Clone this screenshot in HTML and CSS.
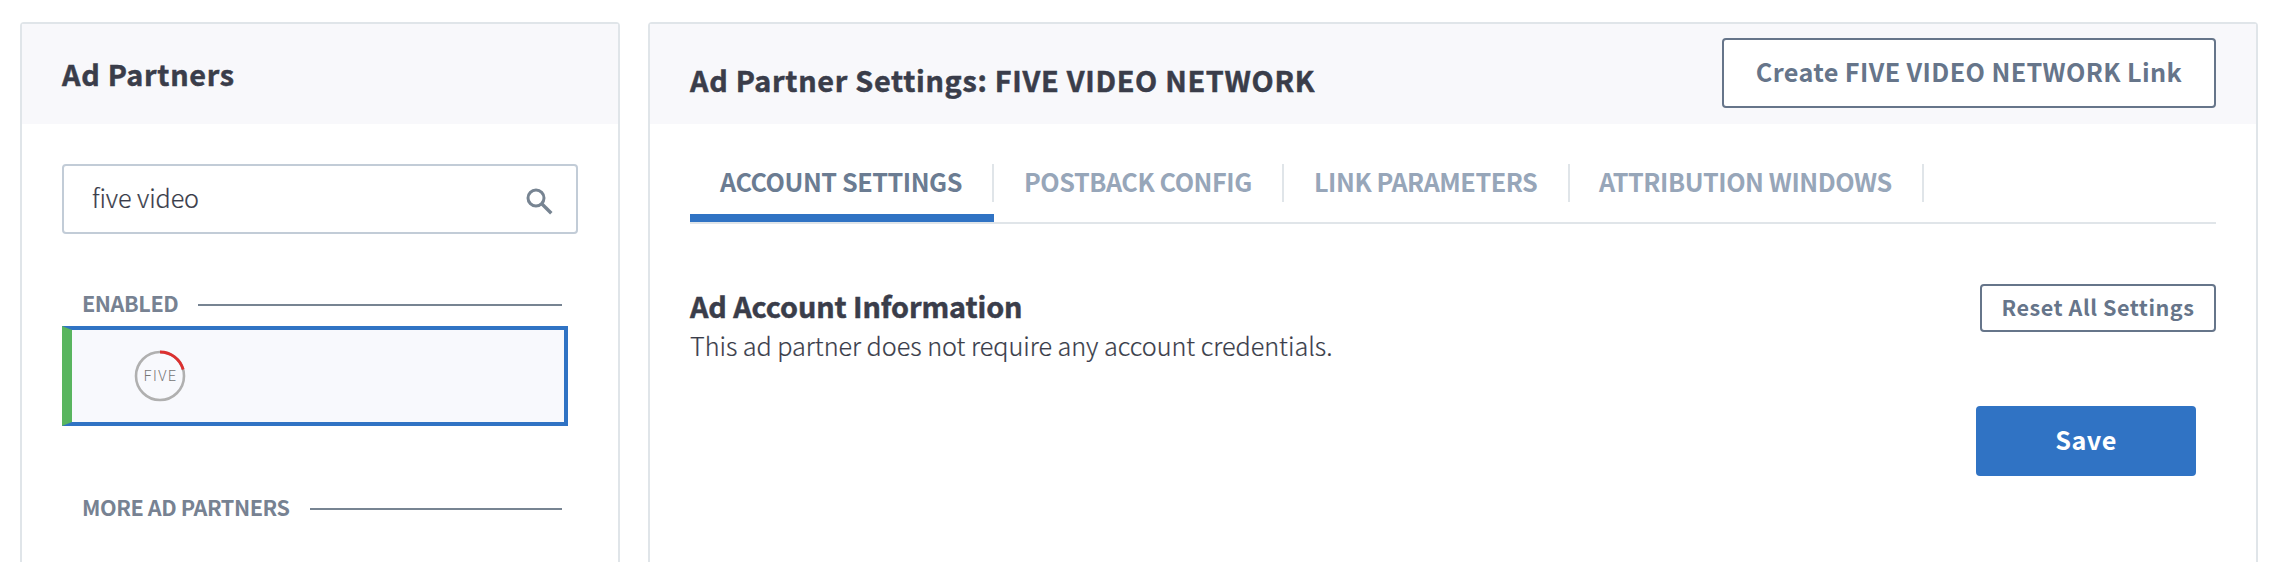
FILE: index.html
```html
<!DOCTYPE html>
<html lang="en">
<head>
<meta charset="utf-8">
<title>Ad Partners</title>
<link rel="stylesheet" href="styles.css">
</head>
<body>
<main class="page">
  <aside class="card partners">
    <header class="card-header"><h2 class="card-title">Ad Partners</h2></header>
    <div class="partners-body">
      <div class="search">
        <span class="search-text">five video</span>
        <svg class="search-icon" viewBox="0 0 28 28"><circle cx="10" cy="10" r="8" fill="none" stroke="#778492" stroke-width="3"/><path d="M16 16L25.3 25.3" stroke="#778492" stroke-width="3.4"/></svg>
      </div>
      <div class="group"><span class="group-label">ENABLED</span><i class="rule"></i></div>
      <div class="partner">
        <svg class="logo" viewBox="0 0 52 52"><circle cx="26" cy="26" r="24" fill="none" stroke="#b0b0b0" stroke-width="2.6"/><path d="M26 2A24 24 0 0 1 49.2 19.5" fill="none" stroke="#dc3030" stroke-width="2.8"/><text class="logo-text" x="9.8" y="30.8">FIVE</text></svg>
      </div>
      <div class="group more"><span class="group-label">MORE AD PARTNERS</span><i class="rule"></i></div>
    </div>
  </aside>
  <section class="card settings">
    <header class="card-header settings-header">
      <h2 class="card-title settings-title">Ad Partner Settings: FIVE VIDEO NETWORK</h2>
      <button class="btn create">Create FIVE VIDEO NETWORK Link</button>
    </header>
    <div class="settings-body">
      <nav class="tabs">
        <a class="tab active">ACCOUNT SETTINGS</a>
        <a class="tab">POSTBACK CONFIG</a>
        <a class="tab link-tab">LINK PARAMETERS</a>
        <a class="tab attribution-tab">ATTRIBUTION WINDOWS</a>
      </nav>
      <div class="account">
        <div class="account-info">
          <h3 class="account-title">Ad Account Information</h3>
          <p class="account-text">This ad partner does not require any account credentials.</p>
        </div>
        <button class="btn reset">Reset All Settings</button>
      </div>
      <button class="btn save">Save</button>
    </div>
  </section>
</main>
</body>
</html>
```
FILE: styles.css
```css
* { box-sizing: border-box; }
body { margin: 0; background: #fff; font-family: "Noto Sans CJK SC", "Noto Sans", sans-serif; color: #3a3d4a; }
h2, h3, p { margin: 0; }
.page { display: flex; gap: 28px; height: 562px; padding: 22px 24px 0 20px; overflow: hidden; }
.card { height: 600px; border: 2px solid #e0e5e9; border-radius: 4px; white-space: nowrap; }
.partners { width: 600px; flex: none; }
.settings { flex: 1; }
.card-header { height: 100px; padding: 0 40px; background: #f8f8fb; }
.card-title { font-size: 28.8px; font-weight: 700; letter-spacing: 0.7px; line-height: 40px; padding-top: 30px; -webkit-text-stroke: 0.5px #3a3d4a; }
.partners-body { padding: 40px 40px 0; }
.search { display: flex; justify-content: space-between; width: 516px; height: 70px; padding: 22px 22px 0 28px; border: 2px solid #c2ccd7; border-radius: 4px; }
.search-text { font-size: 25.2px; font-weight: 300; letter-spacing: -0.1px; line-height: 18px; -webkit-text-stroke: 0.2px #3a3d4a; }
.search-icon { width: 28px; height: 28px; }
.group { display: flex; align-items: center; height: 32px; margin-top: 55px; padding: 0 6px 0 20px; width: 506px; gap: 20px; }
.group-label { padding-bottom: 4px; font-size: 21.6px; font-weight: 700; letter-spacing: -0.42px; line-height: 28px; color: #778292; }
.rule { flex: 1; height: 2px; background: #778492; }
.partner { width: 506px; height: 100px; margin-top: 5px; padding: 20px 0 0 62px; border: 4px solid #3073c4; border-left: 10px solid #59b55f; background: #f8f9fd; }
.logo { display: block; width: 52px; height: 52px; }
.logo-text { font: 300 14px Roboto, sans-serif; letter-spacing: 1.3px; fill: #757575; }
.more { margin-top: 67px; }
.settings-header { display: flex; justify-content: space-between; }
.settings-title { padding-top: 36px; }
.btn { padding: 0 0 4px; border: 2px solid #66758a; border-radius: 4px; background: #fff; color: #66758a; font-family: inherit; font-weight: 700; letter-spacing: 0.5px; }
.create { width: 494px; height: 70px; margin-top: 14px; font-size: 25.2px; letter-spacing: 0.38px; }
.settings-body { padding: 40px 40px 0; }
.tabs { display: flex; height: 60px; border-bottom: 2px solid #e0e5e9; }
.tab { height: 38px; padding-left: 30px; width: 290px; border-right: 2px solid #e0e5e9; font-size: 25.2px; font-weight: 700; letter-spacing: -0.45px; line-height: 34px; color: #97a6b9; }
.active { width: 304px; height: 58px; color: #6b7c92; border-right: 0; border-bottom: 8px solid #3073c4; background: linear-gradient(#e0e5e9, #e0e5e9) right top / 2px 38px no-repeat; }
.link-tab { width: 286px; }
.attribution-tab { width: 354px; padding-left: 29px; }
.account { display: flex; justify-content: space-between; margin-top: 60px; }
.account-title { font-size: 28.8px; font-weight: 700; letter-spacing: -0.1px; line-height: 44px; -webkit-text-stroke: 0.5px #3a3d4a; }
.account-text { font-size: 25.2px; font-weight: 300; letter-spacing: -0.03px; line-height: 34px; -webkit-text-stroke: 0.2px #3a3d4a; }
.reset { width: 236px; height: 48px; font-size: 21.6px; }
.save { display: block; width: 220px; height: 70px; margin: 44px 20px 0 auto; border: 0; background: #3073c4; color: #fff; font-size: 25.2px; }
```
